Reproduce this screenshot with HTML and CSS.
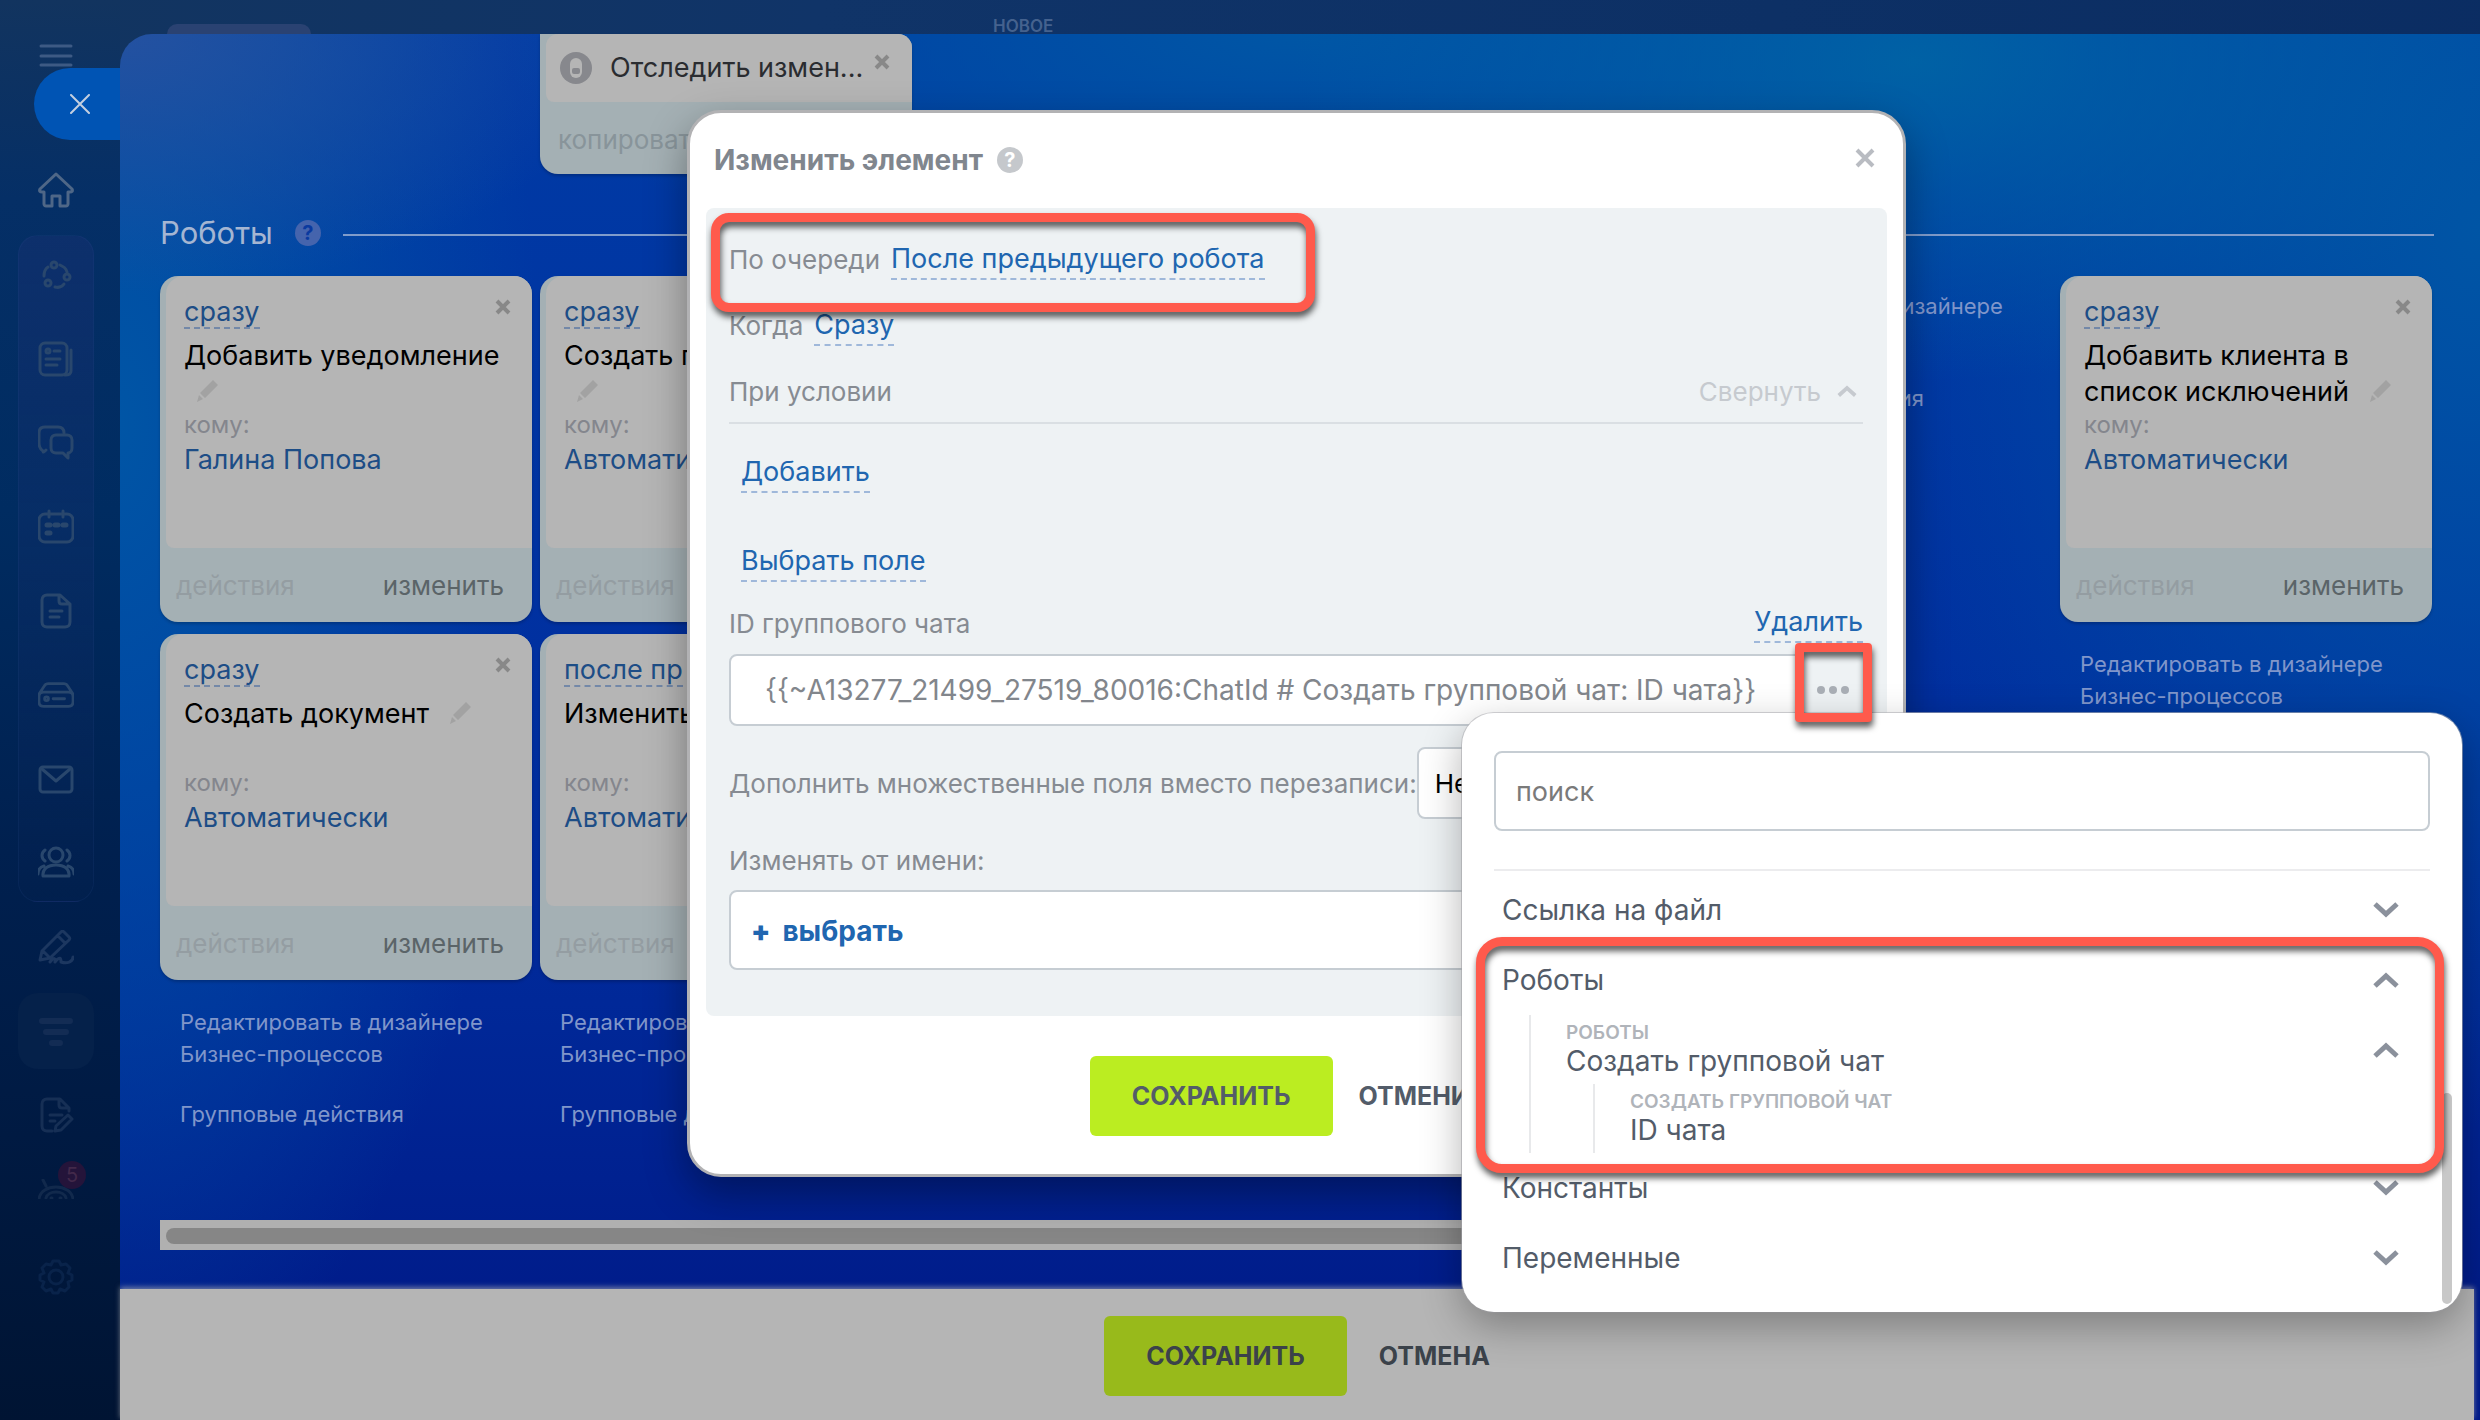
FILE: index.html
```html
<!DOCTYPE html>
<html lang="ru">
<head>
    <meta charset="UTF-8">
    <meta name="viewport" content="width=device-width, initial-scale=1.0">
    <title>Роботы</title>
    <link rel="stylesheet" href="styles.css">
</head>
<body>
    <svg class="sprite" aria-hidden="true">
        <symbol id="cross" viewBox="0 0 16 16"><path d="M2 2l12 12M14 2L2 14" fill="none" stroke="currentColor" stroke-width="4"/></symbol>
        <symbol id="pencil" viewBox="0 0 24 24"><path d="M17 1l5 5L9 19l-5-5zM3 16l4 4-6 3z" fill="currentColor"/></symbol>
        <symbol id="down" viewBox="0 0 26 16"><path d="M2 2l11 10L24 2" fill="none" stroke="currentColor" stroke-width="5"/></symbol>
        <symbol id="up" viewBox="0 0 26 16"><path d="M2 14L13 4l11 10" fill="none" stroke="currentColor" stroke-width="5"/></symbol>
    </svg>

    <div class="page">
        <nav class="sidebar">
            <a href="#" class="nav-item menu"><svg viewBox="0 0 36 36"><path d="M3 8h30M3 18h30M3 27h30"/></svg></a>
            <a href="#" class="nav-item home"><svg viewBox="0 0 36 36"><path d="M18 2L2 17c-1 2 0 3 2 3h2v12c0 1 1 2 2 2h6V24h8v10h6c1 0 2-1 2-2V20h2c2 0 3-1 2-3z"/></svg></a>
            <div class="nav-group">
                <a href="#" class="nav-item"><svg viewBox="0 0 36 36"><circle cx="16" cy="8" r="3"/><circle cx="29" cy="20" r="3"/><circle cx="10" cy="26" r="3"/><path d="M6 19c0-4 1-7 4-9M22 8c4 2 6 3 7 7M17 30c4 1 7 0 9-3"/></svg></a>
                <a href="#" class="nav-item"><svg viewBox="0 0 36 36"><rect x="2" y="2" width="27" height="32" rx="5"/><path d="M33 9v21c0 3-2 4-6 4M16 10h6M8 18h14M8 24h11"/><circle cx="10" cy="10" r="2"/></svg></a>
                <a href="#" class="nav-item"><svg viewBox="0 0 36 36"><path d="M5 26c-3-2-4-4-4-8V8c0-4 2-6 6-6h13c4 0 6 2 6 6M5 26c0 2 1 1 3-1"/><path d="M18 10h11c3 0 5 2 5 5v8c0 3-2 5-4 5v5l-5-5h-7c-3 0-5-2-5-5v-8c0-3 2-5 5-5z"/></svg></a>
                <a href="#" class="nav-item"><svg viewBox="0 0 36 36"><rect x="1" y="5" width="34" height="28" rx="6"/><path d="M11 2v6M25 2v6"/><path d="M9 16h3M17 16h3M25 16h3M9 24h3" stroke-width="5"/></svg></a>
                <a href="#" class="nav-item"><svg viewBox="0 0 36 36"><path d="M9 2h13l10 9v18c0 3-2 5-5 5H9c-3 0-5-2-5-5V7c0-3 2-5 5-5zM21 2v6c0 2 1 3 3 3h8M12 18h12M12 24h9"/></svg></a>
                <a href="#" class="nav-item"><svg viewBox="0 0 38 36"><path d="M1 17L7 8c1-2 2-2 4-2h16c2 0 3 0 4 2l6 9M6 15h26c4 0 5 2 5 5v5c0 4-2 5-5 5H6c-4 0-5-2-5-5v-5c0-3 1-5 5-5z"/><circle cx="9" cy="22" r="2"/><path d="M16 22h12"/></svg></a>
                <a href="#" class="nav-item"><svg viewBox="0 0 36 36"><rect x="2" y="6" width="32" height="25" rx="3"/><path d="M4 8l14 12L32 8"/></svg></a>
                <a href="#" class="nav-item"><svg viewBox="0 0 36 36"><circle cx="18" cy="10" r="7"/><path d="M5 31c-1-7 5-11 13-11s14 4 13 11zM7 5c-4 3-4 8 0 11M29 5c4 3 4 8 0 11M0 29c0-5 2-7 6-8M36 29c0-5-2-7-6-8"/></svg></a>
            </div>
            <a href="#" class="nav-item sign"><svg viewBox="0 0 36 36"><path d="M2 30l2-9L23 2c1-1 2-1 3 0l5 5c1 1 1 2 0 3L12 28zM20 6l7 7M5 21l7 7M12 32c4-5 6-4 5 0 5-6 6-4 6 0 6 2 12 0 12-5"/></svg></a>
            <a href="#" class="nav-item filter"><svg viewBox="0 0 36 36"><path d="M4 8h28M8 19h20M14 30h8" stroke-width="6"/></svg></a>
            <a href="#" class="nav-item docs"><svg viewBox="0 0 36 36"><path d="M14 34H9c-3 0-5-2-5-5V7c0-3 2-5 5-5h13l9 9v3M21 2v6c0 2 1 3 3 3h7M12 18h12M12 24h5M17 34l1-5 12-11 4 4-11 11z"/></svg></a>
            <a href="#" class="nav-item android"><svg viewBox="0 0 36 20"><path d="M1 20C3 4 33 4 35 20M8 7L5 1M8 19c2-8 18-8 20 0M13 19h1M22 19h1"/></svg><span class="badge">5</span></a>
            <a href="#" class="nav-item gear"><svg viewBox="0 0 36 36"><circle cx="18" cy="18" r="7"/><path d="M15 2h6l2 4 5-1 4 4-2 5 4 2v5l-4 2 1 5-4 4-5-2-2 4h-5l-2-4-5 2-4-4 2-5-4-2v-5l4-2-2-5 4-4 5 1z"/></svg></a>
        </nav>

        <div class="workspace">
            <div class="topbar">
                <span class="tab"></span>
                <span class="new-label">НОВОЕ</span>
            </div>

            <main class="slider">
                <div class="board">
                    <div class="columns">
                        <div class="column"></div>
                        <article class="card trigger">
                            <div class="trigger-body">
                                <svg class="trigger-icon" viewBox="0 0 32 32"><circle cx="16" cy="16" r="16" fill="#87888d"/><rect x="10" y="6" width="12" height="20" rx="6" fill="#b5b5b5"/><rect x="12" y="16" width="8" height="6" rx="2" fill="#87888d"/></svg>
                                <span class="trigger-name">Отследить измен...</span>
                                <button type="button" class="cross" aria-label="Удалить триггер"><svg><use href="#cross"/></svg></button>
                            </div>
                            <div class="card-footer"><a href="#" class="muted">копировать</a></div>
                        </article>
                    </div>

                    <div class="section-title">
                        <h1>Роботы</h1>
                        <span class="help">?</span>
                        <hr>
                    </div>

                    <div class="columns">
                        <section class="column">
                            <article class="card">
                                <div class="card-body">
                                    <button type="button" class="cross" aria-label="Удалить робота"><svg><use href="#cross"/></svg></button>
                                    <a href="#" class="when">сразу</a>
                                    <h2>Добавить уведомление <svg class="pencil"><use href="#pencil"/></svg></h2>
                                    <p class="to">кому:</p>
                                    <a href="#" class="person">Галина Попова</a>
                                </div>
                                <div class="card-footer"><a href="#" class="faded">действия</a><a href="#" class="edit">изменить</a></div>
                            </article>
                            <article class="card">
                                <div class="card-body">
                                    <button type="button" class="cross" aria-label="Удалить робота"><svg><use href="#cross"/></svg></button>
                                    <a href="#" class="when">сразу</a>
                                    <h2>Создать документ <svg class="pencil"><use href="#pencil"/></svg></h2>
                                    <p class="to">кому:</p>
                                    <a href="#" class="person">Автоматически</a>
                                </div>
                                <div class="card-footer"><a href="#" class="faded">действия</a><a href="#" class="edit">изменить</a></div>
                            </article>
                            <div class="column-links">
                                <a href="#">Редактировать в дизайнере Бизнес-процессов</a>
                                <a href="#">Групповые действия</a>
                            </div>
                        </section>

                        <section class="column">
                            <article class="card">
                                <div class="card-body">
                                    <a href="#" class="when">сразу</a>
                                    <h2>Создать групповой чат <svg class="pencil"><use href="#pencil"/></svg></h2>
                                    <p class="to">кому:</p>
                                    <a href="#" class="person">Автоматически</a>
                                </div>
                                <div class="card-footer"><a href="#" class="faded">действия</a></div>
                            </article>
                            <article class="card">
                                <div class="card-body">
                                    <a href="#" class="when">после пр</a>
                                    <h2>Изменить</h2>
                                    <p class="to">кому:</p>
                                    <a href="#" class="person">Автоматически</a>
                                </div>
                                <div class="card-footer"><a href="#" class="faded">действия</a></div>
                            </article>
                            <div class="column-links">
                                <a href="#">Редактировать в дизайнере Бизнес-процессов</a>
                                <a href="#">Групповые действия</a>
                            </div>
                        </section>

                        <section class="column"></section>
                        <section class="column"></section>

                        <section class="column">
                            <div class="column-links first">
                                <a href="#">Редактировать в дизайнере Бизнес-процессов</a>
                                <a href="#">Групповые действия</a>
                            </div>
                        </section>

                        <section class="column">
                            <article class="card">
                                <div class="card-body">
                                    <button type="button" class="cross" aria-label="Удалить робота"><svg><use href="#cross"/></svg></button>
                                    <a href="#" class="when">сразу</a>
                                    <h2>Добавить клиента в список исключений <svg class="pencil"><use href="#pencil"/></svg></h2>
                                    <p class="to">кому:</p>
                                    <a href="#" class="person">Автоматически</a>
                                </div>
                                <div class="card-footer"><a href="#" class="faded">действия</a><a href="#" class="edit">изменить</a></div>
                            </article>
                            <div class="column-links">
                                <a href="#">Редактировать в дизайнере Бизнес-процессов</a>
                            </div>
                        </section>
                    </div>

                    <div class="h-scroll"><div class="h-thumb"></div></div>
                </div>

                <footer class="page-footer">
                    <button type="button" class="btn btn-save">Сохранить</button>
                    <button type="button" class="btn btn-cancel">Отмена</button>
                </footer>
            </main>
        </div>

        <button type="button" class="slider-close" aria-label="Закрыть"><svg viewBox="0 0 20 20"><path d="M1 1l18 18M19 1L1 19"/></svg></button>

        <div class="overlay">
            <form class="modal">
                <header class="modal-header">
                    <h2>Изменить элемент</h2>
                    <span class="help">?</span>
                    <button type="button" class="modal-close" aria-label="Закрыть окно"><svg viewBox="0 0 20 20"><path d="M2 2l16 16M18 2L2 18"/></svg></button>
                </header>

                <div class="panel">
                    <div class="row">
                        <span>По очереди</span>
                        <a href="#" class="link">После предыдущего робота</a>
                        <span class="highlight order-mark"></span>
                    </div>
                    <div class="row">
                        <span>Когда</span>
                        <a href="#" class="link">Сразу</a>
                    </div>
                    <div class="row condition">
                        <span>При условии</span>
                        <button type="button" class="collapse">Свернуть <svg><use href="#up"/></svg></button>
                    </div>
                    <div class="add-row"><a href="#" class="link">Добавить</a></div>
                    <div class="add-row"><a href="#" class="link">Выбрать поле</a></div>

                    <div class="field-head">
                        <label for="chatId">ID группового чата</label>
                        <a href="#" class="link">Удалить</a>
                    </div>
                    <div class="field">
                        <input type="text" id="chatId" class="text-input" value="{{~A13277_21499_27519_80016:ChatId # Создать групповой чат: ID чата}}">
                        <button type="button" class="dots" aria-label="Вставить значение"><i></i><i></i><i></i><span class="highlight dots-mark"></span></button>

                        <div class="popup">
                            <input type="text" class="search" placeholder="поиск" aria-label="поиск">
                            <ul class="tree">
                                <li><button type="button" class="node"><span>Ссылка на файл</span><svg><use href="#down"/></svg></button></li>
                                <li class="marked">
                                    <button type="button" class="node"><span>Роботы</span><svg><use href="#up"/></svg></button>
                                    <ul class="children">
                                        <li>
                                            <button type="button" class="node"><span><small>Роботы</small>Создать групповой чат</span><svg><use href="#up"/></svg></button>
                                            <ul class="children">
                                                <li><button type="button" class="node"><span><small>Создать групповой чат</small>ID чата</span></button></li>
                                            </ul>
                                        </li>
                                    </ul>
                                    <span class="highlight tree-mark"></span>
                                </li>
                                <li><button type="button" class="node"><span>Константы</span><svg><use href="#down"/></svg></button></li>
                                <li><button type="button" class="node"><span>Переменные</span><svg><use href="#down"/></svg></button></li>
                            </ul>
                            <div class="v-thumb"></div>
                        </div>
                    </div>

                    <div class="multi">
                        <label for="multi">Дополнить множественные поля вместо перезаписи:</label>
                        <select id="multi"><option>Нет</option></select>
                    </div>

                    <p class="as-user">Изменять от имени:</p>
                    <div class="user-box"><button type="button"><b>+</b>выбрать</button></div>
                </div>

                <footer class="modal-footer">
                    <button type="submit" class="btn btn-save">Сохранить</button>
                    <button type="button" class="btn btn-cancel">Отменить</button>
                </footer>
            </form>
        </div>
    </div>
</body>
</html>
```
FILE: styles.css
```css
* {
    margin: 0;
    padding: 0;
    box-sizing: border-box;
}

body {
    font-family: Inter, "Open Sans", sans-serif;
    font-size: 27px;
    color: #535c69;
    background: #0a2f66;
}

button, input, select {
    font: inherit;
    color: inherit;
    border: none;
    background: none;
}

button {
    cursor: pointer;
}

a {
    color: inherit;
    text-decoration: none;
}

ul {
    list-style: none;
}

.sprite {
    display: none;
}

.page {
    position: relative;
    display: grid;
    grid-template-columns: 120px 1fr;
    min-height: 100vh;
    overflow: hidden;
    background: linear-gradient(100deg, #12345f 0, #103468 30%, #0a2c62 100%);
}

/* Sidebar */
.sidebar {
    display: flex;
    flex-direction: column;
    align-items: center;
    padding: 38px 8px 0 0;
    background: linear-gradient(180deg, #12345f 0, #052f66 14%, #002c61 36%, #00204f 60%, #001a42 80%, #001433 100%);
}

.nav-item {
    display: flex;
    align-items: center;
    justify-content: center;
    width: 36px;
    height: 36px;
    color: #2b4a74;
}

.nav-item svg {
    width: 36px;
    height: 36px;
    fill: none;
    stroke: currentColor;
    stroke-width: 3;
    stroke-linecap: round;
    stroke-linejoin: round;
}

.menu {
    color: #3d5a84;
}

.home {
    margin-top: 98px;
    color: #4f6787;
}

.nav-group {
    display: flex;
    flex-direction: column;
    align-items: center;
    gap: 48px;
    width: 76px;
    margin: 27px 0 28px;
    padding: 21px 0 20px;
    border: 1px solid rgba(60, 90, 160, 0.12);
    border-radius: 20px;
    background: linear-gradient(180deg, rgba(30, 50, 120, 0.35), rgba(20, 50, 100, 0.05));
}

.nav-group .nav-item {
    color: #29476d;
}

.nav-item.sign {
    color: #1c3760;
}

.nav-item.filter {
    width: 76px;
    height: 76px;
    margin-top: 27px;
    border-radius: 20px;
    background: #05214a;
    color: #132c54;
}

.docs {
    margin-top: 28px;
    color: #162f55;
}

.android {
    position: relative;
    margin-top: 38px;
    color: #11294c;
}

.android svg {
    height: 20px;
}

.badge {
    position: absolute;
    top: -10px;
    left: 20px;
    width: 28px;
    height: 28px;
    border-radius: 50%;
    background: #24143a;
    color: #42294a;
    font-size: 20px;
    line-height: 28px;
    text-align: center;
}

.gear {
    margin-top: 52px;
    color: #09234a;
}

/* Page behind the slider */
.workspace {
    display: flex;
    flex-direction: column;
}

.topbar {
    position: relative;
    height: 34px;
}

.tab {
    position: absolute;
    left: 47px;
    bottom: 0;
    width: 144px;
    height: 10px;
    border-radius: 14px 14px 0 0;
    background: #2a4272;
}

.new-label {
    position: absolute;
    left: 873px;
    top: 16px;
    font-size: 17px;
    font-weight: 600;
    line-height: 20px;
    color: #45628e;
}

.slider {
    flex: 1;
    display: flex;
    flex-direction: column;
    border-top-left-radius: 32px;
    background:
        radial-gradient(ellipse 500px 260px at 0 0, rgba(40, 82, 160, 0.9), rgba(40, 82, 160, 0) 100%),
        radial-gradient(ellipse 620px 320px at 76% 2%, rgba(0, 105, 165, 0.8), rgba(0, 105, 165, 0) 100%),
        radial-gradient(ellipse 420px 1000px at 0 28%, rgba(0, 85, 165, 1), rgba(0, 85, 165, 0) 100%),
        radial-gradient(ellipse 640px 900px at 100% 14%, rgba(0, 85, 165, 1), rgba(0, 85, 165, 0) 100%),
        radial-gradient(ellipse 800px 260px at 50% 0, rgba(0, 86, 165, 1), rgba(0, 86, 165, 0) 100%),
        linear-gradient(180deg, #003ba5 0, #0030a0 45%, #002898 70%, #001a88 95%);
}

.slider-close {
    position: absolute;
    left: 34px;
    top: 68px;
    width: 86px;
    height: 72px;
    padding-left: 6px;
    border-radius: 36px 0 0 36px;
    background: #0054b4;
}

.slider-close svg {
    width: 20px;
    height: 20px;
    fill: none;
    stroke: #c3cfe0;
    stroke-width: 2;
    stroke-linecap: round;
}

.board {
    flex: 1;
    padding: 0 46px 39px 40px;
}

.columns {
    display: grid;
    grid-template-columns: repeat(6, 1fr);
    gap: 8px;
    margin-right: 2px;
}

.card {
    position: relative;
    margin-bottom: 12px;
    padding-left: 6px;
    border-radius: 18px;
    background: #a4b0b4;
    box-shadow: 0 2px 3px rgba(0, 0, 0, 0.2);
    overflow: hidden;
}

.card-body {
    height: 272px;
    padding: 19px 20px 0 18px;
    border-radius: 18px 0 0 8px;
    background: #b5b5b5;
}

.card-footer {
    display: flex;
    justify-content: space-between;
    height: 74px;
    padding: 20px 28px 0 10px;
    font-size: 26px;
    line-height: 36px;
}

.card .cross {
    position: absolute;
    top: 22px;
    right: 19px;
    width: 18px;
    height: 18px;
    color: #888;
}

.cross svg {
    display: block;
    width: 16px;
    height: 16px;
}

.when {
    display: inline-block;
    line-height: 31px;
    border-bottom: 2px dashed #7388a8;
    color: #1d4d86;
}

.card h2 {
    min-height: 72px;
    margin-top: 9px;
    font-size: 27px;
    font-weight: 400;
    line-height: 36px;
    color: #000;
}

.pencil {
    width: 24px;
    height: 24px;
    margin-left: 12px;
    vertical-align: -2px;
    color: #a2a2a2;
}

.to {
    font-size: 24px;
    line-height: 30px;
    color: #84868d;
}

.person {
    line-height: 40px;
    color: #1d4d86;
}

.faded {
    color: #949da2;
}

.edit {
    color: #5b6468;
}

.muted {
    color: #88949a;
}

.trigger {
    margin: 0;
    border-radius: 0 14px 18px 18px;
}

.trigger-body {
    display: flex;
    align-items: center;
    gap: 18px;
    height: 68px;
    padding: 0 14px;
    border-radius: 12px 0 0 8px;
    background: #b5b5b5;
}

.trigger .cross {
    top: 19px;
    right: 20px;
}

.trigger-icon {
    width: 32px;
    height: 32px;
}

.trigger-name {
    line-height: 36px;
    color: #2a2c30;
}

.trigger .card-footer {
    height: 72px;
    padding-left: 12px;
}

.section-title {
    display: flex;
    align-items: center;
    gap: 22px;
    height: 54px;
    margin: 32px 0 16px;
}

.section-title h1 {
    font-size: 31px;
    font-weight: 400;
    line-height: 40px;
    color: #a5b6d2;
}

.section-title hr {
    flex: 1;
    margin-top: 4px;
    border: none;
    border-top: 2px solid #809ccb;
}

.help {
    width: 26px;
    height: 26px;
    border-radius: 50%;
    background: #4564ad;
    color: #0a3aa0;
    font-size: 20px;
    font-weight: 700;
    line-height: 26px;
    text-align: center;
}

.column-links {
    display: flex;
    flex-direction: column;
    gap: 28px;
    padding: 14px 40px 0 20px;
    font-size: 22px;
    line-height: 32px;
    color: #8096ca;
}

.h-scroll {
    height: 30px;
    margin-top: 90px;
    padding: 8px 6px;
    background: #b0b0b0;
}

.h-thumb {
    width: 90%;
    height: 16px;
    border-radius: 8px;
    background: #868686;
}

.page-footer {
    display: flex;
    justify-content: center;
    align-items: center;
    gap: 32px;
    height: 131px;
    margin-right: 6px;
    padding-top: 3px;
    background: #b5b5b5;
    box-shadow: 0 -2px 5px rgba(180, 180, 180, 0.6);
}

.btn {
    height: 80px;
    border-radius: 6px;
    font-size: 25px;
    font-weight: 700;
    text-transform: uppercase;
    color: #535c69;
}

.btn-save {
    padding: 0 42px;
    background: #bbed21;
}

.page-footer .btn {
    color: #3b424a;
}

.page-footer .btn-save {
    background: #98ba1b;
}

/* Dialog */
.overlay {
    position: absolute;
    inset: 0 7px 0 120px;
    display: flex;
    justify-content: center;
    align-items: flex-start;
    padding-top: 110px;
}

.modal {
    width: 1219px;
    padding: 0 16px 38px;
    border: 3px solid #b2b2b4;
    border-radius: 34px;
    background: #fff;
    box-shadow: 0 16px 40px rgba(0, 0, 0, 0.35);
}

.modal-header {
    display: flex;
    align-items: center;
    gap: 14px;
    height: 95px;
    padding: 0 12px 2px 8px;
}

.modal-header h2 {
    font-size: 28px;
    font-weight: 700;
    color: #80868e;
}

.modal-header .help {
    background: #c5c8cc;
    color: #fff;
}

.modal-close {
    display: flex;
    margin: 0 0 4px auto;
}

.modal-close svg {
    width: 20px;
    height: 20px;
    fill: none;
    stroke: #b9bcc2;
    stroke-width: 4;
}

.panel {
    padding: 18px 24px 46px 23px;
    border-radius: 8px;
    background: #eef2f4;
    color: #868b92;
    font-size: 26px;
}

.row {
    position: relative;
    display: flex;
    align-items: center;
    gap: 11px;
    height: 66px;
}

.condition {
    justify-content: space-between;
    padding-top: 2px;
    border-bottom: 2px solid #dadfe3;
}

.link {
    display: inline-block;
    line-height: 39px;
    font-size: 27px;
    border-bottom: 2px dashed #9fb8da;
    color: #2066b0;
}

.collapse {
    display: flex;
    align-items: center;
    gap: 16px;
    padding-right: 6px;
    color: #c6cacf;
}

.collapse svg {
    width: 20px;
    height: 12px;
}

.add-row {
    height: 89px;
    padding: 28px 12px 0;
}

.field-head {
    display: flex;
    justify-content: space-between;
    align-items: flex-start;
    height: 52px;
}

.field-head label {
    line-height: 44px;
}

.field {
    position: relative;
    display: flex;
}

.text-input, select, .user-box, .search {
    border: 2px solid #c6cdd3;
    border-radius: 8px;
    background: #fff;
}

.text-input {
    flex: 1;
    height: 72px;
    padding: 0 10px 0 34px;
    font-size: 28px;
    color: #82868c;
}

.dots {
    position: relative;
    z-index: 4;
    display: flex;
    align-items: center;
    justify-content: center;
    gap: 4px;
    width: 60px;
}

.dots i {
    width: 8px;
    height: 8px;
    border-radius: 50%;
    background: #a8adb4;
}

.multi {
    display: flex;
    align-items: center;
    margin-top: 21px;
}

.multi select {
    width: 160px;
    height: 72px;
    padding: 0 16px;
    appearance: none;
    color: #000;
}

.as-user {
    margin: 22px 0 9px;
    line-height: 40px;
}

.user-box {
    height: 80px;
    padding: 20px;
}

.user-box button {
    display: flex;
    gap: 12px;
    font-size: 28px;
    font-weight: 700;
    line-height: 38px;
    color: #2066b0;
}

.modal-footer {
    display: flex;
    justify-content: center;
    gap: 26px;
    padding-top: 40px;
}

/* Red frames */
.highlight {
    position: absolute;
    z-index: 3;
    border: 9px solid #ff5a4c;
    border-radius: 18px;
    filter: drop-shadow(1px 5px 3px rgba(0, 0, 0, 0.65));
    pointer-events: none;
}

.order-mark {
    left: -18px;
    top: -13px;
    width: 604px;
    height: 99px;
}

.dots-mark {
    left: -8px;
    right: -9px;
    top: -11px;
    height: 79px;
    border-radius: 4px;
}

.tree-mark {
    inset: -8px -45px -20px -26px;
    border-radius: 26px;
}

/* Value selector */
.popup {
    position: absolute;
    z-index: 2;
    left: 733px;
    top: 59px;
    width: 1000px;
    padding: 38px 32px 19px;
    border-radius: 32px;
    background: #fff;
    color: #535c69;
    font-size: 28px;
    box-shadow: 0 14px 40px rgba(0, 0, 0, 0.3), 0 0 0 1px rgba(190, 190, 195, 0.6);
}

.search {
    display: block;
    width: 100%;
    height: 80px;
    padding: 0 20px;
    font-size: 27px;
}

.search::placeholder {
    color: #7a7a7a;
}

.tree {
    margin-top: 38px;
    padding: 4px 31px 0 8px;
    border-top: 2px solid #ececee;
}

.marked {
    position: relative;
}

.node {
    display: flex;
    align-items: center;
    justify-content: space-between;
    width: 100%;
    height: 70px;
    line-height: 34px;
    text-align: left;
}

.node svg {
    width: 26px;
    height: 16px;
    color: #8b919c;
}

.node small {
    display: block;
    font-size: 19px;
    font-weight: 600;
    line-height: 22px;
    text-transform: uppercase;
    color: #b0b4ba;
}

.children {
    margin-left: 27px;
    padding-left: 35px;
    border-left: 2px solid #e8e9eb;
}

.children .node {
    height: 69px;
}

.v-thumb {
    position: absolute;
    right: 10px;
    bottom: 8px;
    width: 10px;
    height: 211px;
    border-radius: 5px;
    background: #c8c8c8;
}
```
